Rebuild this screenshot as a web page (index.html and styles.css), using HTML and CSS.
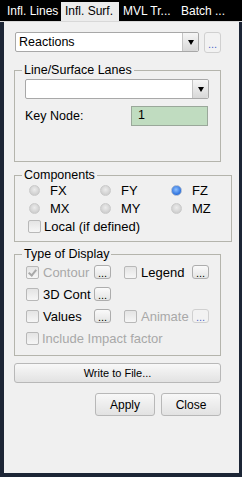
FILE: index.html
```html
<!DOCTYPE html>
<html>
<head>
<meta charset="utf-8">
<link rel="stylesheet" href="styles.css">
</head>
<body>
<div class="tabs">
  <span class="tab t1">Infl. Lines</span>
  <span class="tab t2 active">Infl. Surf.</span>
  <span class="tab t3">MVL Tr...</span>
  <span class="tab t4">Batch ...</span>
</div>
<div class="frame">
  <div class="panel">
    <div class="toprow">
      <div class="combo wide"><span class="ctext">Reactions</span><span class="drop"><i class="tri"></i></span></div>
      <span class="dots big dis">...</span>
    </div>

    <fieldset class="grp g1">
      <legend>Line/Surface Lanes</legend>
      <div class="inner in1">
        <div class="combo lane"><span class="ctext"></span><span class="drop"><i class="tri"></i></span></div>
        <div class="keyrow"><span class="lbl">Key Node:</span><span class="green">1</span></div>
      </div>
    </fieldset>

    <fieldset class="grp g2">
      <legend>Components</legend>
      <div class="inner in2">
        <div class="rgrid">
          <span class="ropt"><i class="radio"></i>FX</span>
          <span class="ropt"><i class="radio"></i>FY</span>
          <span class="ropt"><i class="radio on"></i>FZ</span>
          <span class="ropt"><i class="radio"></i>MX</span>
          <span class="ropt"><i class="radio"></i>MY</span>
          <span class="ropt"><i class="radio"></i>MZ</span>
        </div>
        <div class="localrow"><i class="cb"></i>Local (if defined)</div>
      </div>
    </fieldset>

    <fieldset class="grp g3">
      <legend>Type of Display</legend>
      <div class="inner in3">
        <div class="drow">
          <span class="dcol c1"><i class="cb checked"></i><span class="off lab1">Contour</span><span class="dots sm">...</span></span>
          <span class="dcol c2"><i class="cb"></i><span class="lab2">Legend</span><span class="dots sm">...</span></span>
        </div>
        <div class="drow">
          <span class="dcol c1"><i class="cb"></i><span class="lab1">3D Cont</span><span class="dots sm">...</span></span>
        </div>
        <div class="drow">
          <span class="dcol c1"><i class="cb"></i><span class="lab1">Values</span><span class="dots sm">...</span></span>
          <span class="dcol c2"><i class="cb"></i><span class="off lab2">Animate</span><span class="dots sm dis">...</span></span>
        </div>
        <div class="drow">
          <span class="dcol"><i class="cb"></i><span class="off">Include Impact factor</span></span>
        </div>
      </div>
    </fieldset>

    <div class="btn write">Write to File...</div>
    <div class="btnrow">
      <div class="btn act">Apply</div>
      <div class="btn act">Close</div>
    </div>
  </div>
</div>
</body>
</html>
```
FILE: styles.css
```css
html, body {
  margin: 0;
  padding: 0;
  background: #1c2535;
  font-family: "Liberation Sans", Arial, sans-serif;
  font-size: 12px;
  color: #000;
}
.tabs {
  height: 21px;
  background: #000;
  border-bottom: 1px solid #d8d8d8;
  display: flex;
  align-items: flex-end;
  padding-left: 4px;
  box-sizing: border-box;
  height: 22px;
}
.tab {
  color: #fff;
  height: 19px;
  line-height: 19px;
  padding: 0 3px;
  white-space: nowrap;
  box-sizing: border-box;
}
.t1 { width: 57px; }
.t2 { width: 58px; padding-left: 4px; }
.t3 { width: 60px; padding-left: 4px; }
.t4 { width: 56px; padding-left: 2px; }
.tab.active {
  background: #ececec;
  color: #000;
}
.frame {
  padding: 0 3px 4px 4px;
}
.panel {
  background: #f0f0f0;
  height: 451px;
  padding: 10px 0 0 10px;
  box-sizing: border-box;
}
.toprow {
  display: flex;
  align-items: center;
  height: 20px;
}
.combo {
  display: flex;
  align-items: center;
  background: #fff;
  border: 1px solid #a8a8a8;
  border-radius: 2px;
  box-sizing: border-box;
  height: 20px;
}
.combo.wide { width: 184px; margin-left: 1px; }
.combo.lane { width: 184px; }
.ctext {
  flex: 1;
  padding-left: 3px;
  font-size: 12.5px;
}
.drop {
  width: 15px;
  height: 18px;
  border-left: 1px solid #c4c4c4;
  border-radius: 0 2px 2px 0;
  background: linear-gradient(#f6f6f6, #d8d8d8);
  display: flex;
  align-items: center;
  justify-content: center;
}
.tri {
  width: 0;
  height: 0;
  border-left: 3.5px solid transparent;
  border-right: 3.5px solid transparent;
  border-top: 5px solid #000;
  margin-top: 1px;
}
.dots {
  display: inline-flex;
  align-items: center;
  justify-content: center;
  border: 1px solid #adadad;
  border-radius: 3px;
  background: linear-gradient(#fafafa, #e4e4e4);
  box-sizing: border-box;
  font-size: 11px;
  line-height: 1;
  color: #000;
}
.dots.big {
  width: 17px;
  height: 21px;
  margin-left: 5px;
  padding-top: 4px;
}
.dots.dis {
  color: #5068c8;
  border-color: #d0d0d0;
  background: #f2f2f2;
}
.dots.sm {
  width: 17px;
  height: 14px;
  padding-top: 3px;
}
.grp {
  margin: 0;
  padding: 0;
  width: 207px;
  box-sizing: border-box;
  border: 1px solid #b4b4ac;
  border-radius: 0;
}
.grp legend {
  margin-left: 7px;
  padding: 0 2px;
  font-size: 12.5px;
  line-height: 14px;
}
.g1 { margin-top: 11px; }
.g2 { margin-top: 6px; }
.g3 { margin-top: 5px; }
.inner { box-sizing: border-box; }
.in1 { height: 84px; padding: 2px 0 0 10px; }
.keyrow {
  display: flex;
  align-items: center;
  margin-top: 7px;
  height: 20px;
}
.lbl { width: 106px; font-size: 12.5px; }
.green {
  width: 77px;
  height: 20px;
  box-sizing: border-box;
  background: #c0dcc0;
  border: 1px solid #9aa89a;
  padding-left: 6px;
  line-height: 17px;
  font-size: 12.5px;
}
.in2 { height: 59px; padding: 0 0 0 14px; }
.rgrid {
  display: grid;
  grid-template-columns: 71px 71px 60px;
  grid-auto-rows: 16px;
  row-gap: 2px;
}
.ropt {
  display: flex;
  align-items: center;
  font-size: 13px;
}
.radio {
  width: 11px;
  height: 11px;
  border-radius: 50%;
  background: radial-gradient(circle at 50% 40%, #ececec, #c4c4c4);
  border: 1px solid #cacaca;
  box-sizing: border-box;
  margin-right: 10px;
}
.radio.on {
  background: radial-gradient(circle at 45% 40%, #8ec0ff, #2a6fdc 70%);
  border-color: #a8b8d0;
}
.localrow {
  display: flex;
  align-items: center;
  height: 16px;
  margin-top: 2px;
  margin-left: -1px;
  font-size: 13px;
}
.cb {
  width: 13px;
  height: 13px;
  box-sizing: border-box;
  border: 1px solid #b8b8b8;
  border-radius: 2px;
  background: linear-gradient(#e4e4e4, #f6f6f6);
  margin-right: 3px;
  flex: none;
  position: relative;
}
.cb.checked::after {
  content: "";
  position: absolute;
  left: 3px;
  top: 1px;
  width: 3px;
  height: 6px;
  border: solid #a8a8a8;
  border-width: 0 2px 2px 0;
  transform: rotate(40deg);
}
.in3 { height: 94px; padding: 1px 0 0 11px; }
.drow {
  display: flex;
  align-items: center;
  height: 20px;
  margin-bottom: 2px;
  font-size: 13px;
}
.dcol {
  display: flex;
  align-items: center;
}
.dcol.c1 { width: 98px; }
.lab1 { width: 51px; padding-left: 1px; }
.lab2 { width: 51px; padding-left: 1px; }
.off { color: #a8a8a8; }
.btn {
  border: 1px solid #b8b8b8;
  border-radius: 3px;
  background: linear-gradient(#f8f8f8, #e2e2e2);
  box-sizing: border-box;
  display: flex;
  align-items: center;
  justify-content: center;
  font-size: 11px;
}
.write {
  width: 207px;
  height: 20px;
  margin-top: 7px;
}
.btnrow {
  display: flex;
  justify-content: flex-end;
  gap: 6px;
  width: 207px;
  margin-top: 10px;
}
.act {
  width: 60px;
  height: 23px;
  font-size: 12px;
}
```
